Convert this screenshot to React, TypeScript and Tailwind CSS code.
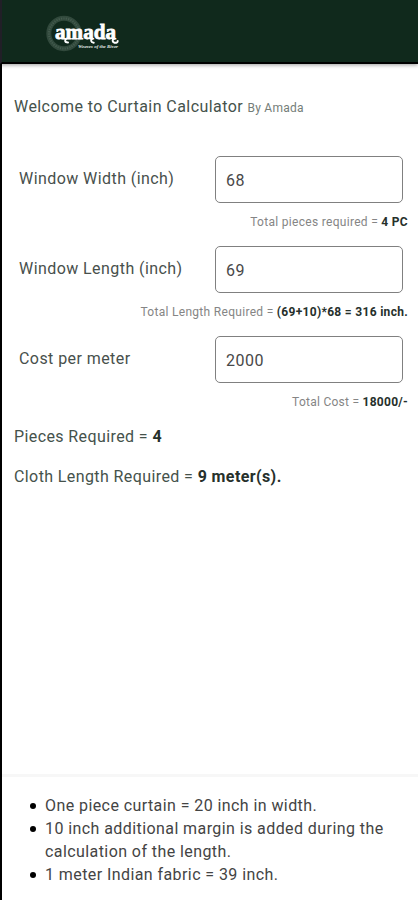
import { useState } from "react";

type FieldProps = {
  label: string;
  value: string;
  onChange: (value: string) => void;
  hint: string;
  result: string;
  hintClassName: string;
};

const NOTES = [
  "One piece curtain = 20 inch in width.",
  "10 inch additional margin is added during the calculation of the length.",
  "1 meter Indian fabric = 39 inch."
];

function Logo() {
  return (
    <svg width="78" height="40" viewBox="0 0 78 40" role="img" aria-label="amada">
      <circle cx="20" cy="19.5" r="15.2" fill="none" stroke="#31493c" strokeWidth="5" />
      <circle cx="20" cy="19.5" r="15" fill="none" stroke="#6b8074" strokeWidth="2" strokeDasharray="1.2 1.2" opacity="0.35" />
      <text
        x="11"
        y="24.8"
        textLength="61"
        lengthAdjust="spacingAndGlyphs"
        fill="#ffffff"
        stroke="#ffffff"
        strokeWidth="0.8"
        fontFamily="'Liberation Serif', serif"
        fontWeight="700"
        fontSize="22"
      >
        amada
      </text>
      <g fill="none" stroke="#ffffff" strokeWidth="2" strokeLinecap="round">
        <path d="M22.500 24.500c-2 1.500-2 4 1.500 4" />
        <path d="M48.500 24.500c-2 1.200-2 3.800 1.200 4.200" />
        <path d="M70.500 24.500c-2.500 1-2.500 3.500 0 4.200 1.500.3 3.200 0 3.200-1.800" />
      </g>
      <text
        x="34"
        y="33.8"
        textLength="40"
        lengthAdjust="spacingAndGlyphs"
        fill="#e4ebe7"
        fontFamily="'Liberation Serif', serif"
        fontStyle="italic"
        fontWeight="700"
        fontSize="4.5"
      >
        Weaves of the River
      </text>
    </svg>
  );
}

function Field({ label, value, onChange, hint, result, hintClassName }: FieldProps) {
  return (
    <div className="h-[90px]">
      <label className="flex h-[47px] items-center justify-between pl-[17px] pr-[15px]">
        <span className="pb-[2px] text-base tracking-[0.43px] text-[#48504c]">{label}</span>
        <input
          value={value}
          onChange={(e) => onChange(e.target.value)}
          className="h-[47px] w-[188px] rounded-[5px] border border-[#808080] bg-white px-[10px] pt-[2px] text-base tracking-[0.5px] text-[#484848] outline-none"
        />
      </label>
      <p className={`mt-[11px] pr-[10px] text-right text-xs leading-4 text-[#858585] ${hintClassName}`}>
        {hint} = <b className="font-bold text-[#26302b]">{result}</b>
      </p>
    </div>
  );
}

export default function App() {
  const [width, setWidth] = useState("68");
  const [length, setLength] = useState("69");
  const [cost, setCost] = useState("2000");

  return (
    <div className="flex h-[900px] w-[418px] flex-col overflow-hidden bg-white font-['Roboto',sans-serif]">
      <header className="h-[64px] shrink-0 border-b-2 border-l-2 border-b-black border-l-[#211f27] bg-[#10291c] pl-[42px] pt-[14px] shadow-[0_1px_4px_rgba(0,0,0,0.4)]">
        <Logo />
      </header>

      <main className="flex-1 border-l-2 border-black">
        <h1 className="pl-[12px] pt-[31px] text-base leading-6 tracking-[0.43px] text-[#45524b]">
          Welcome to Curtain Calculator <span className="text-xs tracking-[0.25px] text-[#747d78]">By Amada</span>
        </h1>

        <div className="mt-[37px]">
          <Field label="Window Width (inch)" value={width} onChange={setWidth} hint="Total pieces required" result="4 PC" hintClassName="tracking-[0.3px]" />
          <Field label="Window Length (inch)" value={length} onChange={setLength} hint="Total Length Required" result="(69+10)*68 = 316 inch." hintClassName="tracking-[0.3px]" />
          <Field label="Cost per meter" value={cost} onChange={setCost} hint="Total Cost" result="18000/-" hintClassName="tracking-[0.26px]" />
        </div>

        <p className="-mt-px pl-[12px] text-base leading-6 tracking-[0.4px] text-[#45524b]">
          Pieces Required = <b className="text-[#26302b]">4</b>
        </p>
        <p className="mt-4 pl-[12px] text-base leading-6 tracking-[0.4px] text-[#45524b]">
          Cloth Length Required = <b className="text-[#26302b]">9 meter(s).</b>
        </p>
      </main>

      <footer className="h-[126px] shrink-0 border-l-2 border-black">
        <div className="h-[3px] bg-[#f7f7f7]" />
        <ul className="pl-[28px] pr-6 pt-[17px] text-base leading-[23px] tracking-[0.42px] text-[#444]">
          {NOTES.map((note) => (
            <li key={note} className="flex gap-[9px]">
              <span className="mt-[9px] size-[6px] shrink-0 rounded-full bg-black" />
              <span>{note}</span>
            </li>
          ))}
        </ul>
      </footer>
    </div>
  );
}
